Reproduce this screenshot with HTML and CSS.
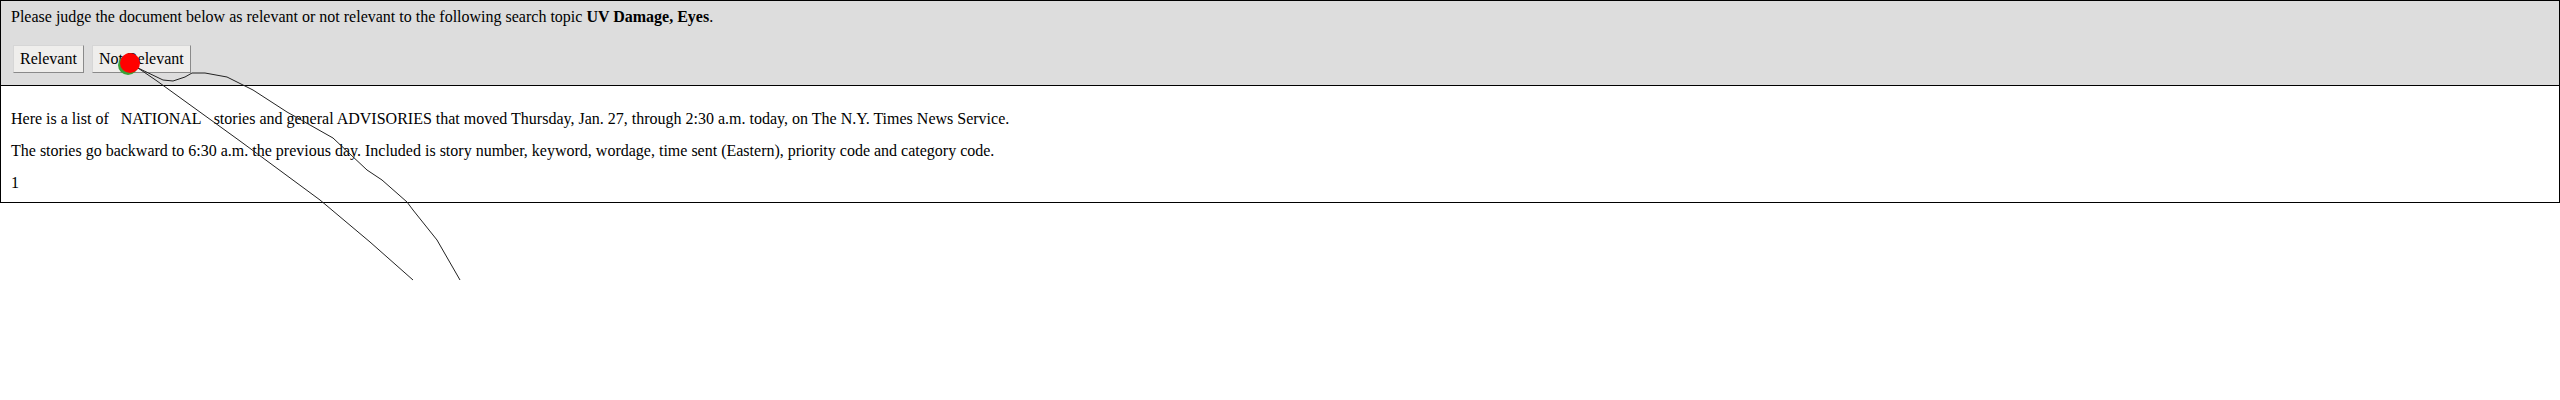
FILE: index.html
```html
<!DOCTYPE html>
<html>
<head>
<meta charset="utf-8">
<link rel="stylesheet" href="styles.css">
</head>
<body>
<div class="panel">
  <div class="header">
    <p class="prompt">Please judge the document below as relevant or not relevant to the following search topic <b>UV Damage, Eyes</b>.</p>
    <div class="actions">
      <button class="btn">Relevant</button>
      <button class="btn">Not Relevant</button>
    </div>
  </div>
  <div class="doc">
    <p>Here is a list of&nbsp;&nbsp; NATIONAL&nbsp;&nbsp; stories and general ADVISORIES that moved Thursday, Jan. 27, through 2:30 a.m. today, on The N.Y. Times News Service.</p>
    <p>The stories go backward to 6:30 a.m. the previous day. Included is story number, keyword, wordage, time sent (Eastern), priority code and category code.</p>
    <p>1</p>
  </div>
</div>
<svg class="trace" width="2560" height="400" viewBox="0 0 2560 400">
  <polyline class="path" points="138,68 157,81 240,141 320,200 370,242 413,280"/>
  <polyline class="path" points="138,68 163,80 173,81 185,77 192,73 205,73 227,77 253,90 287,112 333,138 367,170 382,180 407,202 413,210 437,240 460,280"/>
  <circle class="dot-shadow" cx="128" cy="65" r="10"/>
  <circle class="dot" cx="130" cy="63" r="10"/>
</svg>
</body>
</html>
```

FILE: styles.css
```css
html, body {
  margin: 0;
  padding: 0;
  background: #ffffff;
}

body {
  font-family: "Liberation Serif", "Times New Roman", serif;
  font-size: 16px;
  line-height: 18px;
  color: #000000;
  position: relative;
  width: 2560px;
  height: 400px;
  overflow: hidden;
}

.panel {
  border: 1px solid #000000;
}

.header {
  background: #dddddd;
  border-bottom: 1px solid #000000;
  padding: 7px 10px 12px;
  display: flex;
  flex-direction: column;
  gap: 19px;
}

.prompt {
  margin: 0;
}

.actions {
  display: flex;
  gap: 8px;
  padding-left: 2px;
}

.btn {
  font-family: "Liberation Serif", "Times New Roman", serif;
  font-size: 16px;
  line-height: 18px;
  color: #000000;
  background: #efeeec;
  border: 1px solid;
  border-color: #d6d6d6 #8a8a8a #8a8a8a #d6d6d6;
  border-radius: 0;
  padding: 4px 6px;
  margin: 0;
}

.doc {
  display: flex;
  flex-direction: column;
  gap: 14px;
  padding: 24px 10px 10px;
}

.doc p {
  margin: 0;
}

.trace {
  position: absolute;
  top: 0;
  left: 0;
  pointer-events: none;
}

.path {
  fill: none;
  stroke: #222222;
  stroke-width: 1;
}

.dot-shadow {
  fill: #3aa035;
}

.dot {
  fill: #ff0000;
}
```
